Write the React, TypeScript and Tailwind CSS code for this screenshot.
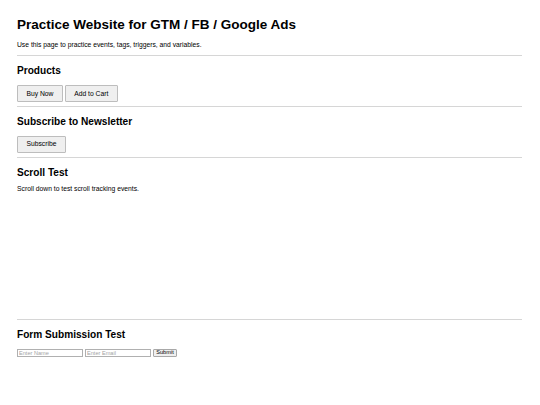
export default function App() {
  const font = { fontFamily: '"Liberation Sans", Arial, sans-serif' }
  const btn =
    'h-[17px] bg-[#efefef] border border-[#bdbdbd] rounded-[1px] text-[6.75px] leading-[7.8px] px-[8.4px] text-black'
  const h2 = 'text-[10.125px] font-bold leading-[11.6px] mt-[9px] text-black'
  const hr = 'border-0 border-t border-[#d6d6d6]'

  return (
    <div className="min-h-[405px] bg-white pl-[17px] pr-[18px] pt-[17px] text-black" style={font}>
      <h1 className="text-[13.5px] font-bold leading-[15.5px]">
        Practice Website for GTM / FB / Google Ads
      </h1>
      <p className="text-[6.75px] leading-[7.8px] mt-[8px]">
        Use this page to practice events, tags, triggers, and variables.
      </p>
      <hr className={`${hr} mt-[7px]`} />

      <section>
        <h2 className={h2}>Products</h2>
        <div className="flex gap-[2px] mt-[8.3px]">
          <button className={btn}>Buy Now</button>
          <button className={btn}>Add to Cart</button>
        </div>
      </section>
      <hr className={`${hr} mt-[3.8px]`} />

      <section>
        <h2 className={h2}>Subscribe to Newsletter</h2>
        <div className="flex mt-[8.3px]">
          <button className={btn}>Subscribe</button>
        </div>
      </section>
      <hr className={`${hr} mt-[3.8px]`} />

      <section>
        <h2 className={h2}>Scroll Test</h2>
        <p className="text-[6.75px] leading-[7.8px] mt-[7.2px]">
          Scroll down to test scroll tracking events.
        </p>
        <div className="h-[126px]" />
      </section>
      <hr className={hr} />

      <section>
        <h2 className={h2}>Form Submission Test</h2>
        <form className="flex gap-[2px] mt-[8px]" onSubmit={e => e.preventDefault()}>
          <input
            type="text"
            placeholder="Enter Name"
            className="w-[66px] h-[8px] border border-[#b0b0b0] px-[1px] text-[5.6px] leading-none placeholder:text-[#a3a3a3]"
          />
          <input
            type="email"
            placeholder="Enter Email"
            className="w-[66px] h-[8px] border border-[#b0b0b0] px-[1px] text-[5.6px] leading-none placeholder:text-[#a3a3a3]"
          />
          <button
            type="submit"
            className="w-[24px] h-[8px] bg-[#efefef] border border-[#a8a8a8] rounded-[1px] text-[5.6px] leading-none text-black"
          >
            Submit
          </button>
        </form>
      </section>
    </div>
  )
}
